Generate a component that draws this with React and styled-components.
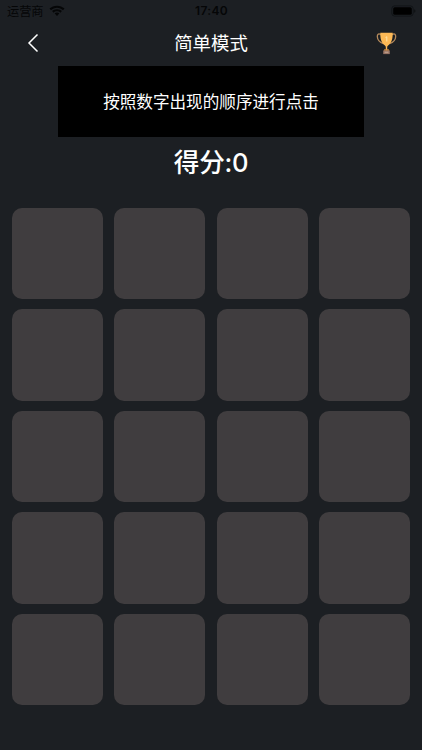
import React from 'react';
import styled, { createGlobalStyle } from 'styled-components'


const GlobalStyle = createGlobalStyle`

    body {
        margin: 0;
        background-color: #1c1f23;
        font-family: Inter, "Noto Sans CJK SC", sans-serif;
    }

`;

const Screen = styled.div`

    display: flex;
    flex-direction: column;
    width: 100%;
    height: 750px;
    overflow: hidden;
    color: white;
    background-color: #1c1f23;

`;

const StatusBar = styled.div`

    display: grid;
    grid-template-columns: 1fr auto 1fr;
    align-items: center;
    height: 22px;
    padding: 0 6px 0 7px;
    box-sizing: border-box;
    color: #050607;

`;

const Carrier = styled.div`

    display: flex;
    align-items: center;
    gap: 5px;
    font-size: 12.2px;
    height: 22px;

`;

const CarrierName = styled.span`

    padding-top: 2px;
    line-height: 20px;

`;

const Clock = styled.div`

    font-size: 12px;
    font-weight: 600;
    letter-spacing: 0.35px;
    line-height: 22px;

`;

const BatterySlot = styled.div`

    display: flex;
    justify-content: flex-end;

`;

const NavBar = styled.div`

    display: grid;
    grid-template-columns: 60px 1fr 60px;
    align-items: center;
    height: 43.5px;

`;

const NavButton = styled.button`

    display: flex;
    justify-content: ${props => props.$side == "right" ? "flex-end" : "flex-start"};
    padding: ${props => props.$side == "right" ? "0 25px 1px 0" : "0 0 1px 27px"};
    border: none;
    background: none;

`;

const Title = styled.h1`

    margin: 0;
    text-align: center;
    font-size: 18.4px;
    font-weight: 400;
    line-height: 43px;

`;

const Banner = styled.div`

    display: flex;
    align-items: center;
    justify-content: center;
    align-self: center;
    width: 305.5px;
    height: 71.2px;
    font-size: 16.6px;
    background-color: #000;

`;

const Score = styled.div`

    height: 71.3px;
    text-align: center;
    font-size: 25.6px;
    font-weight: 500;
    letter-spacing: -0.3px;
    line-height: 52px;

`;

const Board = styled.div`

    display: grid;
    grid-template-columns: repeat(4, 91.2px);
    grid-auto-rows: 91.2px;
    gap: 10.3px 11.4px;
    justify-content: center;

`;

const Tile = styled.div`

    border-radius: 10px;
    background-color: #403d3f;

`;


function WifiIcon(){
    return (
        <svg width="16" height="12" viewBox="0 0 16 12" fill="currentColor">
            <path d="M8 .7C5.100.7 2.500 1.800.5 3.600L2 5.200C3.600 3.700 5.700 2.800 8 2.800s4.400.9 6 2.400l1.500-1.600C13.500 1.800 10.900.7 8 .7z" />
            <path d="M8 4.200c-1.900 0-3.600.7-4.900 1.900l1.500 1.600C5.500 6.800 6.700 6.300 8 6.300s2.500.5 3.400 1.400l1.500-1.600C11.600 4.900 9.900 4.200 8 4.200z" />
            <path d="M8 7.600c-.9 0-1.700.3-2.300.9L8 11l2.300-2.500C9.700 7.900 8.900 7.600 8 7.600z" />
        </svg>
    );
}

function BatteryIcon(){
    return (
        <svg width="25" height="12" viewBox="0 0 25 12">
            <rect x=".8" y=".9" width="21.400" height="10.200" rx="2.800" fill="none" stroke="#111417" />
            <rect x="2.200" y="2.300" width="18.600" height="7.400" rx="1.500" fill="#000" />
            <path d="M23.300 4.200v3.600c.7-.3 1.100-1 1.100-1.800s-.4-1.500-1.100-1.800z" fill="#0d0f11" />
        </svg>
    );
}

function BackIcon(){
    return (
        <svg width="12" height="20" viewBox="0 0 12 20" fill="none" stroke="white" strokeWidth="1.500">
            <path d="M10.500 1.500L2 10l8.500 8.500" />
        </svg>
    );
}

function TrophyIcon(){
    return (
        <svg width="21" height="23" viewBox="0 0 21 23">
            <g fill="none" stroke="#b58a5c" strokeWidth="1.300">
                <path d="M5 2.800C2.800 1 1.200 2.200 1.300 4.500c.1 3.400 2.700 5.900 6.200 7.200" />
                <path d="M16 2.800c2.200-1.800 3.800-.6 3.700 1.700-.1 3.400-2.700 5.900-6.200 7.200" />
            </g>
            <path d="M4.300.8h12.400c.1 5.900-1 10.100-4.300 12.400-.9.7-1.200 1.300-1.200 2.300v2.900H9.800v-2.900c0-1-.3-1.600-1.200-2.300C5.300 10.900 4.200 6.700 4.300.8z" fill="#fdb955" />
            <path d="M9.500 5.600l1.300-.9v4.800" fill="none" stroke="#ffe3a6" />
            <path d="M8.300 17.300h4.400l.6 1.400H7.700z" fill="#d98f3c" />
            <path d="M7.200 18.500h6.600v3.600H7.200z" fill="#967264" />
            <path d="M8.600 19.600h3.800v1.400H8.600z" fill="#b99a85" />
        </svg>
    );
}


const tiles = Array.from({ length: 20 }, (_, i) => i);


function App(){

    return (

        <Screen>
            <GlobalStyle />

            <StatusBar>
                <Carrier>
                    <CarrierName>运营商</CarrierName>
                    <WifiIcon />
                </Carrier>
                <Clock>17:40</Clock>
                <BatterySlot>
                    <BatteryIcon />
                </BatterySlot>
            </StatusBar>

            <NavBar>
                <NavButton aria-label="返回">
                    <BackIcon />
                </NavButton>
                <Title>简单模式</Title>
                <NavButton $side="right" aria-label="排行榜">
                    <TrophyIcon />
                </NavButton>
            </NavBar>

            <Banner>按照数字出现的顺序进行点击</Banner>

            <Score>得分:0</Score>

            <Board>
                {tiles.map(i => <Tile key={i} />)}
            </Board>

        </Screen>

    );
}


export default App;
